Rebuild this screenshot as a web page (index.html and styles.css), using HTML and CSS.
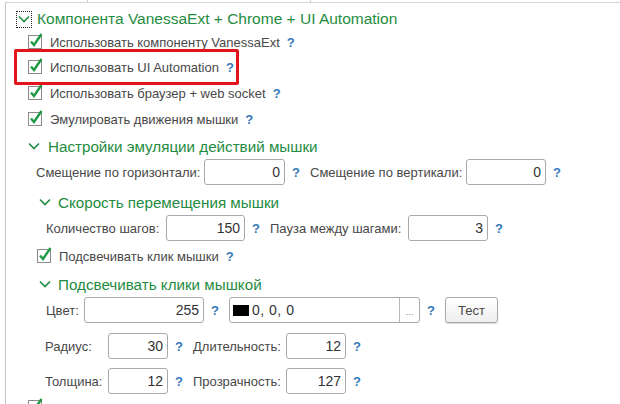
FILE: index.html
```html
<!DOCTYPE html>
<html>
<head>
<meta charset="utf-8">
<link rel="stylesheet" href="styles.css">
</head>
<body>
<div class="topbar"><span class="tb1"></span><span class="tb2"></span></div>
<div class="panel">
  <div class="row hdr">
    <span class="toggle"><svg width="12" height="8" viewBox="0 0 12 8"><polyline points="1,1.5 6,6.5 11,1.5" fill="none" stroke="#1f8c42" stroke-width="1.6"/></svg></span>
    <span class="title">Компонента VanessaExt + Chrome + UI Automation</span>
  </div>

  <div class="row cb l1 h24">
    <svg class="check" width="16" height="16" viewBox="0 0 16 16"><rect x="0.5" y="2.5" width="13" height="13" fill="#fff" stroke="#8a8a8a"/><polyline points="3,8.5 6,12 13.5,1" fill="none" stroke="#1f9a44" stroke-width="2.4"/></svg>
    <span class="lbl">Использовать компоненту VanessaExt</span><span class="help">?</span>
  </div>

  <div class="row cb l1 mark">
    <svg class="check" width="16" height="16" viewBox="0 0 16 16"><rect x="0.5" y="2.5" width="13" height="13" fill="#fff" stroke="#8a8a8a"/><polyline points="3,8.5 6,12 13.5,1" fill="none" stroke="#1f9a44" stroke-width="2.4"/></svg>
    <span class="lbl">Использовать UI Automation</span><span class="help">?</span>
  </div>

  <div class="row cb l1">
    <svg class="check" width="16" height="16" viewBox="0 0 16 16"><rect x="0.5" y="2.5" width="13" height="13" fill="#fff" stroke="#8a8a8a"/><polyline points="3,8.5 6,12 13.5,1" fill="none" stroke="#1f9a44" stroke-width="2.4"/></svg>
    <span class="lbl">Использовать браузер + web socket</span><span class="help">?</span>
  </div>

  <div class="row cb l1">
    <svg class="check" width="16" height="16" viewBox="0 0 16 16"><rect x="0.5" y="2.5" width="13" height="13" fill="#fff" stroke="#8a8a8a"/><polyline points="3,8.5 6,12 13.5,1" fill="none" stroke="#1f9a44" stroke-width="2.4"/></svg>
    <span class="lbl">Эмулировать движения мышки</span><span class="help">?</span>
  </div>

  <div class="row grp g1 mt1">
    <svg class="chev" width="12" height="8" viewBox="0 0 12 8"><polyline points="1,1.5 6,6.5 11,1.5" fill="none" stroke="#1f8c42" stroke-width="1.6"/></svg>
    <span class="gtitle">Настройки эмуляции действий мышки</span>
  </div>

  <div class="row fld f1">
    <span class="flbl w168">Смещение по горизонтали:</span>
    <span class="inp w81">0</span><span class="help hs">?</span>
    <span class="flbl w156">Смещение по вертикали:</span>
    <span class="inp w80">0</span><span class="help">?</span>
  </div>

  <div class="row grp g2 mt4">
    <svg class="chev" width="12" height="8" viewBox="0 0 12 8"><polyline points="1,1.5 6,6.5 11,1.5" fill="none" stroke="#1f8c42" stroke-width="1.6"/></svg>
    <span class="gtitle">Скорость перемещения мышки</span>
  </div>

  <div class="row fld f2">
    <span class="flbl w120">Количество шагов:</span>
    <span class="inp w79">150</span><span class="help hs">?</span>
    <span class="flbl w138">Пауза между шагами:</span>
    <span class="inp w80">3</span><span class="help">?</span>
  </div>

  <div class="row cb l2 mt2">
    <svg class="check" width="16" height="16" viewBox="0 0 16 16"><rect x="0.5" y="2.5" width="13" height="13" fill="#fff" stroke="#8a8a8a"/><polyline points="3,8.5 6,12 13.5,1" fill="none" stroke="#1f9a44" stroke-width="2.4"/></svg>
    <span class="lbl">Подсвечивать клик мышки</span><span class="help">?</span>
  </div>

  <div class="row grp g2 mt2">
    <svg class="chev" width="12" height="8" viewBox="0 0 12 8"><polyline points="1,1.5 6,6.5 11,1.5" fill="none" stroke="#1f8c42" stroke-width="1.6"/></svg>
    <span class="gtitle">Подсвечивать клики мышкой</span>
  </div>

  <div class="row fld f2">
    <span class="flbl w38">Цвет:</span>
    <span class="inp w120">255</span><span class="help hs">?</span>
    <span class="color">
      <span class="cval"><span class="swatch"></span>0, 0, 0</span>
      <span class="cbtn">...</span>
    </span><span class="help hs">?</span>
    <span class="btn">Тест</span>
  </div>

  <div class="row fld f4 mt10">
    <span class="flbl w63">Радиус:</span>
    <span class="inp w60">30</span><span class="help hs">?</span>
    <span class="flbl w93">Длительность:</span>
    <span class="inp w60">12</span><span class="help">?</span>
  </div>

  <div class="row fld f4 mt9">
    <span class="flbl w63">Толщина:</span>
    <span class="inp w60">12</span><span class="help hs">?</span>
    <span class="flbl w93">Прозрачность:</span>
    <span class="inp w60">127</span><span class="help">?</span>
  </div>

  <div class="row cb l1">
    <svg class="check" width="16" height="16" viewBox="0 0 16 16"><rect x="0.5" y="2.5" width="13" height="13" fill="#fff" stroke="#8a8a8a"/><polyline points="3,8.5 6,12 13.5,1" fill="none" stroke="#1f9a44" stroke-width="2.4"/></svg>
  </div>
</div>
</body>
</html>
```

FILE: styles.css
```css
html, body {
  margin: 0;
  padding: 0;
  background: #fff;
  overflow: hidden;
}
body {
  width: 620px;
  height: 404px;
  font-family: "Liberation Sans", Arial, sans-serif;
  font-size: 13px;
  color: #484848;
}
.topbar {
  display: flex;
  height: 2px;
  margin-left: 5px;
}
.tb1 {
  width: 82px;
  border-right: 1px solid #cfcfcf;
}
.tb2 {
  width: 222px;
  border-right: 1px solid #cfcfcf;
}
.panel {
  margin-left: 5px;
  border-left: 1px solid #c4c4c4;
  border-top: 1px solid #d4d4d4;
  height: 420px;
}
.row {
  display: flex;
  align-items: center;
  height: 26px;
  white-space: nowrap;
}
.h24 { height: 24px; }
.mt1 { margin-top: 1px; }
.mt2 { margin-top: 2px; }
.mt4 { margin-top: 4px; }
.mt9 { margin-top: 9px; }
.mt10 { margin-top: 10px; }

.hdr {
  height: 22px;
  margin-top: 5px;
  padding-left: 10px;
}
.toggle {
  display: flex;
  align-items: center;
  justify-content: center;
  width: 16px;
  height: 17px;
  box-sizing: border-box;
  border: 1px dotted #222;
  margin-right: 5px;
}
.title {
  font-size: 15.5px;
  color: #1f8c42;
}

.cb.l1 { padding-left: 22px; }
.cb.l2 { padding-left: 31px; }
.check {
  overflow: visible;
  margin-right: 6px;
  margin-top: -2px;
}
.lbl {
  color: #484848;
}
.help {
  display: inline-block;
  width: 8px;
  margin-left: 7px;
  color: #3579ba;
  font-weight: bold;
  font-size: 13px;
}
.help.hs {
  margin-right: 10px;
}

.grp .chev {
  margin-right: 7px;
}
.g1 { padding-left: 22px; }
.g2 { padding-left: 33px; }
.g1 .chev { margin-right: 8px; }
.gtitle {
  font-size: 15.2px;
  color: #1f8c42;
}

.f1 { padding-left: 30px; }
.f2 { padding-left: 40px; }
.f4 { padding-left: 39px; }
.flbl {
  display: inline-block;
  color: #484848;
}
.w38 { width: 38px; }
.w63 { width: 63px; }
.w93 { width: 93px; }
.w120 { width: 120px; }
.w138 { width: 138px; }
.w156 { width: 156px; }
.w168 { width: 168px; }

.inp {
  display: inline-flex;
  align-items: center;
  justify-content: flex-end;
  height: 26px;
  box-sizing: border-box;
  border: 1px solid #a9a9a9;
  border-radius: 3px;
  padding-right: 4px;
  color: #333;
  background: #fff;
  font-size: 14px;
}
.w60 { width: 60px; }
.w79 { width: 79px; }
.w80 { width: 80px; }
.w81 { width: 81px; }
.w120.inp { width: 120px; }

.color {
  display: inline-flex;
  width: 191px;
  height: 26px;
  box-sizing: border-box;
  border: 1px solid #a9a9a9;
  border-radius: 3px;
}
.cval {
  flex: 1;
  display: flex;
  align-items: center;
  padding-left: 3px;
  font-size: 14px;
  color: #333;
  letter-spacing: 0.5px;
}
.swatch {
  display: inline-block;
  width: 16px;
  height: 11px;
  background: #000;
  margin-right: 3px;
}
.cbtn {
  width: 20px;
  border-left: 1px solid #b8b8b8;
  display: flex;
  align-items: flex-end;
  justify-content: center;
  padding-bottom: 5px;
  box-sizing: border-box;
  font-size: 9px;
  color: #777;
}
.btn {
  display: inline-flex;
  align-items: center;
  justify-content: center;
  width: 53px;
  height: 26px;
  box-sizing: border-box;
  border: 1px solid #a9a9a9;
  border-radius: 3px;
  background: linear-gradient(#ffffff, #eeeeee);
  box-shadow: 0 1px 1px rgba(0,0,0,0.15);
  color: #484848;
}

.mark {
  position: relative;
}
.mark::after {
  content: "";
  position: absolute;
  left: 8px;
  top: -5px;
  width: 225px;
  height: 36px;
  box-sizing: border-box;
  border: 3px solid #e3141c;
  border-radius: 2px;
}
```
